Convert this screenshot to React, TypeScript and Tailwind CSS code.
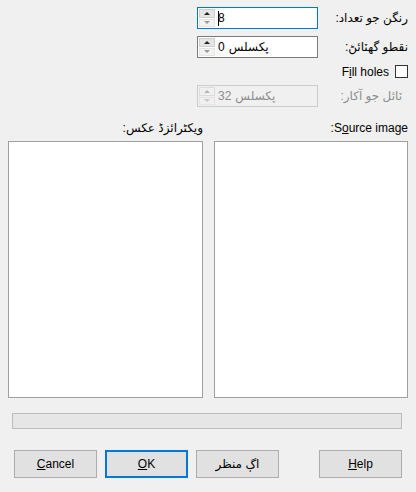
import React from "react";

const font = { fontFamily: '"Liberation Sans", "DejaVu Sans", sans-serif' };

function Spin({ disabled }: { disabled?: boolean }) {
  const tri = disabled ? "border-b-[#b5b5b5]" : "border-b-[#222]";
  const triDown = disabled ? "border-t-[#c8c8c8]" : "border-t-[#9a9a9a]";
  return (
    <div className="flex flex-col w-[17px] h-full py-[1px] pl-[1px] gap-[1px]">
      <div className={`flex-1 flex items-center justify-center ${disabled ? "bg-[#f0f0f0] border border-[#dcdcdc]" : "bg-[#e5e5e5] border border-[#cfcfcf]"}`}>
        <div className={`w-0 h-0 border-l-[3px] border-r-[3px] border-b-[3px] border-l-transparent border-r-transparent ${tri}`} />
      </div>
      <div className={`flex-1 flex items-center justify-center ${disabled ? "bg-[#f0f0f0]" : "bg-[#f3f3f3]"} border border-[#e4e4e4]`}>
        <div className={`w-0 h-0 border-l-[3px] border-r-[3px] border-t-[3px] border-l-transparent border-r-transparent ${triDown}`} />
      </div>
    </div>
  );
}

// number and unit kept as separate spans: number sits next to the spin buttons
function Field({
  num,
  unit,
  focused,
  disabled,
}: {
  num: string;
  unit?: string;
  focused?: boolean;
  disabled?: boolean;
}) {
  const border = focused
    ? "border-[#0078d7]"
    : disabled
      ? "border-[#cccccc]"
      : "border-[#7a7a7a]";
  return (
    <div
      className={`w-[121px] h-[22px] border ${border} ${disabled ? "bg-[#f0f0f0] text-[#8d8d8d]" : "bg-white text-black"} flex items-stretch`}
    >
      <Spin disabled={disabled} />
      <div className="flex items-center pl-[3px] gap-[4px] whitespace-nowrap">
        <span className="flex items-center">
          {focused && <span className="w-[1px] h-[15px] bg-black -mr-[1px]" />}
          {num}
        </span>
        {unit && <span dir="rtl">{unit}</span>}
      </div>
    </div>
  );
}

// rtl dialog: the colon ends up on the left of the label
function Label({ text, className = "" }: { text: string; className?: string }) {
  return (
    <span dir="rtl" className={className}>
      {text}
    </span>
  );
}

function Btn({
  children,
  primary,
  className = "",
}: {
  children: React.ReactNode;
  primary?: boolean;
  className?: string;
}) {
  return (
    <div
      className={`w-[83px] h-[28px] flex items-center justify-center bg-[#e1e1e1] ${primary ? "border-2 border-[#0078d7]" : "border border-[#adadad]"} ${className}`}
    >
      {children}
    </div>
  );
}

export default function App() {
  return (
    <div
      className="w-[416px] h-[492px] bg-[#f0f0f0] text-[12px] text-black flex flex-col"
      style={font}
    >
      <div className="flex flex-col gap-[7px] pt-[7px] pl-[197px] pr-[8px]">
        <div className="flex items-center justify-between">
          <Field num="8" focused />
          <Label text="رنگن جو تعداد:" />
        </div>
        <div className="flex items-center justify-between">
          <Field num="0" unit="پکسلس" />
          <Label text="نقطو گهٽائڻ:" />
        </div>
        <div className="flex items-center justify-end gap-[6px] h-[15px] -mt-[1px]">
          <span>
            F<span className="underline">i</span>ll holes
          </span>
          <div className="w-[13px] h-[13px] border border-[#333] bg-white" />
        </div>
        <div className="flex items-center justify-between -mt-[1px]">
          <Field num="32" unit="پکسلس" disabled />
          <Label text="ٽائل جو آکار:" className="text-[#8d8d8d] pr-[6px]" />
        </div>
      </div>

      <div className="flex gap-[11px] pl-[8px] pr-[8px] mt-[14px]">
        <div className="flex flex-col w-[195px]">
          <div className="h-[14px] flex items-center justify-end leading-none">
            <Label text="ویکٹرائزڈ عکس:" />
          </div>
          <div className="mt-[6px] h-[257px] bg-white border border-[#a0a0a0]" />
        </div>
        <div className="flex flex-col w-[194px]">
          <div className="h-[14px] flex items-center justify-end leading-none">
            <span className="flex items-center">
              <span>:</span>
              <span>
                S<span className="underline">o</span>urce image
              </span>
            </span>
          </div>
          <div className="mt-[6px] h-[257px] bg-white border border-[#a0a0a0]" />
        </div>
      </div>

      <div className="mx-[12px] w-[390px] mt-[15px] h-[16px] bg-[#e6e6e6] border border-[#bcbcbc]" />

      <div className="flex mt-[21px] pl-[14px] pr-[14px] items-center">
        <Btn>
          <span>
            <span className="underline">C</span>ancel
          </span>
        </Btn>
        <Btn primary className="ml-[8px]">
          <span>
            <span className="underline">O</span>K
          </span>
        </Btn>
        <Btn className="ml-[8px]">
          <span dir="rtl">اڳ منظر</span>
        </Btn>
        <Btn className="ml-auto">
          <span>
            <span className="underline">H</span>elp
          </span>
        </Btn>
      </div>
    </div>
  );
}
